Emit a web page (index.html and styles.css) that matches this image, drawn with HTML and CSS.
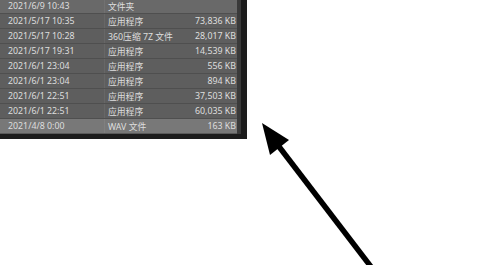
FILE: index.html
```html
<!DOCTYPE html>
<html>
<head>
<meta charset="utf-8">
<link rel="stylesheet" href="styles.css">
</head>
<body>
<div class="stage">
  <div class="panel">
    <div class="list">
      <div class="row first"><span class="date">2021/6/9 10:43</span><span class="type">文件夹</span><span class="size"></span></div>
      <div class="row"><span class="date">2021/5/17 10:35</span><span class="type">应用程序</span><span class="size">73,836 KB</span></div>
      <div class="row"><span class="date">2021/5/17 10:28</span><span class="type">360压缩 7Z 文件</span><span class="size">28,017 KB</span></div>
      <div class="row"><span class="date">2021/5/17 19:31</span><span class="type">应用程序</span><span class="size">14,539 KB</span></div>
      <div class="row"><span class="date">2021/6/1 23:04</span><span class="type">应用程序</span><span class="size">556 KB</span></div>
      <div class="row"><span class="date">2021/6/1 23:04</span><span class="type">应用程序</span><span class="size">894 KB</span></div>
      <div class="row"><span class="date">2021/6/1 22:51</span><span class="type">应用程序</span><span class="size">37,503 KB</span></div>
      <div class="row"><span class="date">2021/6/1 22:51</span><span class="type">应用程序</span><span class="size">60,035 KB</span></div>
      <div class="row sel"><span class="date">2021/4/8 0:00</span><span class="type">WAV 文件</span><span class="size">163 KB</span></div>
    </div>
    <div class="edge"></div>
  </div>
  <svg class="arrow" width="500" height="265" viewBox="0 0 500 265">
    <line x1="375" y1="272" x2="277" y2="144" stroke="#000" stroke-width="5.5" />
    <polygon points="262,123 289,140 270,155" fill="#000" />
  </svg>
</div>
</body>
</html>
```
FILE: styles.css
```css
html, body {
  margin: 0;
  padding: 0;
  background: #ffffff;
}
.stage {
  position: relative;
  width: 500px;
  height: 265px;
  overflow: hidden;
}
.panel {
  display: flex;
  width: 247px;
  background: #1c1c1c;
  padding-bottom: 5px;
}
.list {
  width: 237px;
  margin-top: -1px;
  display: flex;
  flex-direction: column;
}
.row {
  display: flex;
  align-items: center;
  height: 14px;
  border-bottom: 1px solid #4f4f4f;
  background: #5e5e5e;
  color: #dedede;
  font-family: "Noto Sans", "Noto Sans CJK SC", sans-serif;
  font-size: 8.8px;
  white-space: nowrap;
  background-image: linear-gradient(to right, transparent 104px, rgba(255,255,255,0.06) 104px, rgba(255,255,255,0.06) 105px, transparent 105px);
}
.row.first {
  background-color: #696969;
}
.row.sel {
  background-color: #787878;
  border-bottom-color: #5a5a5a;
}
.date {
  width: 100px;
  padding-left: 8px;
}
.type {
  width: 70px;
}
.size {
  flex: 1;
  text-align: right;
  padding-right: 1px;
}
.edge {
  width: 4px;
  background: #3a3a3a;
}
.arrow {
  position: absolute;
  left: 0;
  top: 0;
}
```
